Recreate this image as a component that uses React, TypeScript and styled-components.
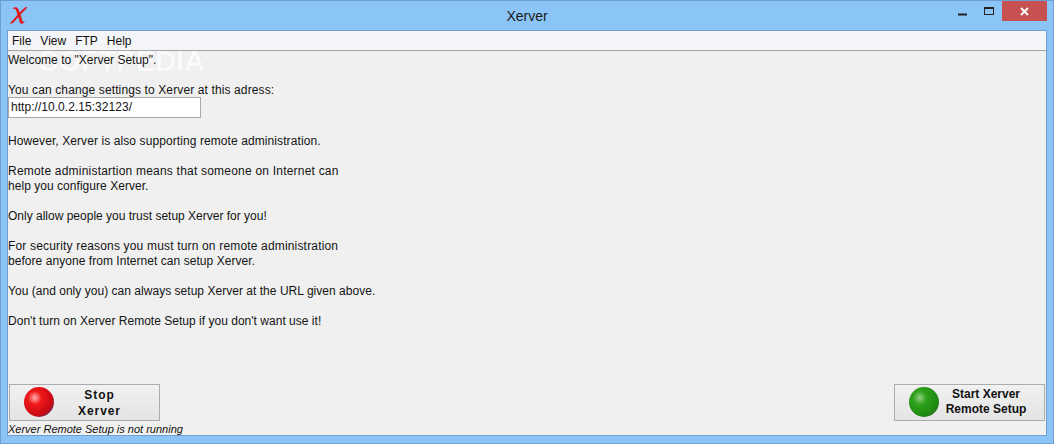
import React from "react";
import styled, { createGlobalStyle } from "styled-components";

const Global = createGlobalStyle`
  html, body { margin: 0; padding: 0; width: 1054px; height: 444px; overflow: hidden; }
  #root { width: 1054px; height: 444px; }
  * { box-sizing: border-box; }
`;

const Frame = styled.div`
  width: 1054px;
  height: 444px;
  background: #8bc5f8;
  border: 1px solid #6f9fd0;
  display: flex;
  flex-direction: column;
  padding: 0 6px 7px 6px;
  font-family: "Liberation Sans", Arial, sans-serif;
  color: #111;
`;

const TitleBar = styled.div`
  height: 29px;
  flex: none;
  position: relative;
  display: flex;
  align-items: center;
  justify-content: center;
  font-size: 14px;
  color: #1a1a1a;
`;

const AppLogo = styled.span`
  position: absolute;
  left: 2px;
  top: 3px;
  width: 20px;
  height: 22px;
`;

const WindowControls = styled.div`
  position: absolute;
  right: 0;
  top: 0;
  display: flex;
  align-items: flex-start;
`;

const ControlButton = styled.div<{ $w: number; $close?: boolean }>`
  width: ${(p) => p.$w}px;
  height: 20px;
  display: flex;
  align-items: center;
  justify-content: center;
  background: ${(p) => (p.$close ? "#c75050" : "transparent")};
`;

const MinGlyph = styled.svg`
  margin-top: 6px;
`;

const Client = styled.div`
  flex: 1;
  display: flex;
  flex-direction: column;
  background: #f0f0f0;
  border: 1px solid #6f9fd0;
  position: relative;
  min-height: 0;
`;

const MenuBar = styled.div`
  height: 20px;
  flex: none;
  background: #f4f5f8;
  border-bottom: 1px solid #a3a3a3;
  display: flex;
  align-items: center;
  padding-left: 4px;
  gap: 9px;
  font-size: 12px;
  color: #111;
`;

const Body = styled.div`
  flex: 1;
  min-height: 0;
  display: flex;
  flex-direction: column;
  position: relative;
`;

const Watermark = styled.div`
  position: absolute;
  left: 31px;
  top: -6px;
  font-size: 29px;
  font-weight: 700;
  line-height: 32px;
  color: #fafafa;
  text-shadow: 0 0 1px #e2e2e2;
  pointer-events: none;
  white-space: nowrap;
`;

const TextBlock = styled.div`
  font-size: 12px;
  line-height: 15px;
  height: 333px;
  padding-top: 2px;
  flex: none;
  color: #141414;
  position: relative;
  z-index: 1;
`;

const Line = styled.div<{ $ls?: number }>`
  height: 15px;
  white-space: pre;
  letter-spacing: ${(p) => p.$ls ?? 0}px;
`;

const Blank = styled.div`
  height: 15px;
`;

const UrlBox = styled.div`
  width: 193px;
  height: 21px;
  background: #fff;
  border: 1px solid #a9a9a9;
  margin: -1px 0 16px 0;
  padding-left: 2px;
  line-height: 19px;
  font-size: 12px;
  letter-spacing: 0.04px;
  color: #141414;
`;

const Footer = styled.div`
  flex: 1;
  display: flex;
  justify-content: space-between;
  align-items: flex-start;
  padding: 0 1px;
`;

const LeftStack = styled.div`
  display: flex;
  flex-direction: column;
`;

const ActionButton = styled.div`
  width: 151px;
  height: 37px;
  background: linear-gradient(#f1f1f1, #e4e4e4);
  border: 1px solid #acacac;
  display: flex;
  align-items: center;
  padding-left: 14px;
`;

const ButtonLabel = styled.div`
  flex: 1;
  text-align: center;
  font-size: 12px;
  font-weight: 700;
  color: #111;
`;

const StopLabel = styled(ButtonLabel)`
  line-height: 16px;
  padding-right: 14px;
  letter-spacing: 0.9px;
`;

const StartLabel = styled(ButtonLabel)`
  line-height: 15px;
  padding-right: 11px;
  margin-top: -2px;
`;

const Status = styled.div`
  font-size: 11px;
  font-style: italic;
  line-height: 13px;
  margin: 2px 0 0 -1px;
  color: #111;
`;

const BallSvg = styled.svg`
  flex: none;
  margin-top: -1px;
`;

const Ball = ({ id, c1, c2, c3, c4 }: { id: string; c1: string; c2: string; c3: string; c4: string }) => (
  <BallSvg width="30" height="30" viewBox="0 0 30 30">
    <defs>
      <radialGradient id={id} cx="0.36" cy="0.36" r="0.72">
        <stop offset="0" stopColor={c1} />
        <stop offset="0.32" stopColor={c2} />
        <stop offset="0.82" stopColor={c3} />
        <stop offset="1" stopColor={c4} />
      </radialGradient>
    </defs>
    <circle cx="15" cy="15" r="15" fill={`url(#${id})`} />
  </BallSvg>
);

const Logo = () => (
  <svg width="20" height="22" viewBox="0 0 20 22">
    <path
      d="M4 4.5 C6 3 8 3.2 9 5 L10.5 9 L15 4.5 C16 3.5 17 3.2 18 3.5 L11.3 10.5 L13 17 C13.4 18.4 14.5 18.3 15.4 17.6 C14 19.8 11.6 20.2 11 18.2 L9.6 12.6 L4.5 18 C3.6 19 2.6 19.4 1.4 19.2 L8.8 11 L7.3 6 C6.9 4.6 5.5 4.2 4 4.5 Z"
      fill="#e01414"
      stroke="#e01414"
      strokeWidth="0.6"
    />
  </svg>
);

export default function App() {
  return (
    <>
      <Global />
      <Frame>
        <TitleBar>
          <AppLogo>
            <Logo />
          </AppLogo>
          Xerver
          <WindowControls>
            <ControlButton $w={26}>
              <MinGlyph width="9" height="3" viewBox="0 0 9 3">
                <rect width="9" height="2" y="0.5" fill="#222" />
              </MinGlyph>
            </ControlButton>
            <ControlButton $w={27}>
              <svg width="10" height="8" viewBox="0 0 10 8">
                <rect x="0.5" y="0.5" width="9" height="7" fill="none" stroke="#222" />
                <rect x="0" y="0" width="10" height="2" fill="#222" />
              </svg>
            </ControlButton>
            <ControlButton $w={45} $close>
              <svg width="9" height="9" viewBox="0 0 9 9">
                <path d="M1 1 L8 8 M8 1 L1 8" stroke="#fff" strokeWidth="2" />
              </svg>
            </ControlButton>
          </WindowControls>
        </TitleBar>
        <Client>
          <MenuBar>
            <span>File</span>
            <span>View</span>
            <span>FTP</span>
            <span>Help</span>
          </MenuBar>
          <Body>
            <TextBlock>
              <Line>Welcome to "Xerver Setup".</Line>
              <Blank />
              <Line $ls={0.12}>You can change settings to Xerver at this adress:</Line>
              <UrlBox>http://10.0.2.15:32123/</UrlBox>
              <Line $ls={0.09}>However, Xerver is also supporting remote administration.</Line>
              <Blank />
              <Line $ls={0.21}>Remote administartion means that someone on Internet can</Line>
              <Line $ls={0.04}>help you configure Xerver.</Line>
              <Blank />
              <Line>Only allow people you trust setup Xerver for you!</Line>
              <Blank />
              <Line $ls={0.17}>For security reasons you must turn on remote administration</Line>
              <Line $ls={0.05}>before anyone from Internet can setup Xerver.</Line>
              <Blank />
              <Line $ls={0.03}>You (and only you) can always setup Xerver at the URL given above.</Line>
              <Blank />
              <Line $ls={0.02}>Don't turn on Xerver Remote Setup if you don't want use it!</Line>
            </TextBlock>
            <Watermark>SOFTPEDIA</Watermark>
            <Footer>
              <LeftStack>
                <ActionButton>
                  <Ball id="red" c1="#ffb0b0" c2="#f01818" c3="#c80812" c4="#6b2a55" />
                  <StopLabel>
                    Stop
                    <br />
                    Xerver
                  </StopLabel>
                </ActionButton>
                <Status>Xerver Remote Setup is not running</Status>
              </LeftStack>
              <ActionButton>
                <Ball id="green" c1="#8fd07f" c2="#2fa01c" c3="#1f8a10" c4="#2e6b20" />
                <StartLabel>
                  Start Xerver
                  <br />
                  Remote Setup
                </StartLabel>
              </ActionButton>
            </Footer>
          </Body>
        </Client>
      </Frame>
    </>
  );
}
